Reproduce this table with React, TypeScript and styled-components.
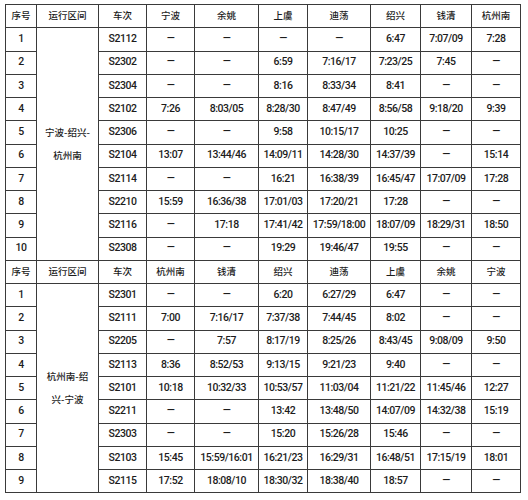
import React from "react";
import styled, { createGlobalStyle } from "styled-components";

const Global = createGlobalStyle`
  html, body { margin: 0; padding: 0; background: #ffffff; }
  body { font-family: Roboto, "Noto Sans CJK SC", sans-serif; }
`;

const Page = styled.div`
  width: 528px;
  height: 500px;
  padding: 4px 0 0 5px;
  box-sizing: border-box;
  background: #ffffff;
  overflow: hidden;
`;

const Table = styled.table`
  border-collapse: collapse;
  table-layout: fixed;
  width: 515px;
  color: #1c1c1c;
`;

const Row = styled.tr`
  height: 23.26px;
`;

const Cell = styled.td<{ $cjk?: boolean }>`
  border: 1px solid #3a3a3a;
  padding: 0;
  text-align: center;
  vertical-align: middle;
  white-space: nowrap;
  font-family: ${(p) =>
    p.$cjk ? `"Noto Sans CJK SC", sans-serif` : `Roboto, "Noto Sans CJK SC", sans-serif`};
  font-size: ${(p) => (p.$cjk ? "9.5px" : "10.5px")};
  font-weight: 500;
  letter-spacing: ${(p) => (p.$cjk ? "0" : "-0.45px")};
  line-height: 1;
`;

const RouteCell = styled.td`
  border: 1px solid #3a3a3a;
  padding: 0;
  text-align: center;
  vertical-align: middle;
  font-family: "Noto Sans CJK SC", sans-serif;
  font-size: 9.5px;
  font-weight: 500;
  line-height: 23px;
`;

const widths = [31, 62, 48, 48, 64, 49, 63, 50, 51, 49];

type Section = {
  header: string[];
  route: [string, string];
  rows: string[][];
};

const D = "—";

const sections: Section[] = [
  {
    header: ["宁波", "余姚", "上虞", "迪荡", "绍兴", "钱清", "杭州南"],
    route: ["宁波-绍兴-", "杭州南"],
    rows: [
      ["S2112", D, D, D, D, "6:47", "7:07/09", "7:28"],
      ["S2302", D, D, "6:59", "7:16/17", "7:23/25", "7:45", D],
      ["S2304", D, D, "8:16", "8:33/34", "8:41", D, D],
      ["S2102", "7:26", "8:03/05", "8:28/30", "8:47/49", "8:56/58", "9:18/20", "9:39"],
      ["S2306", D, D, "9:58", "10:15/17", "10:25", D, D],
      ["S2104", "13:07", "13:44/46", "14:09/11", "14:28/30", "14:37/39", D, "15:14"],
      ["S2114", D, D, "16:21", "16:38/39", "16:45/47", "17:07/09", "17:28"],
      ["S2210", "15:59", "16:36/38", "17:01/03", "17:20/21", "17:28", D, D],
      ["S2116", D, "17:18", "17:41/42", "17:59/18:00", "18:07/09", "18:29/31", "18:50"],
      ["S2308", D, D, "19:29", "19:46/47", "19:55", D, D],
    ],
  },
  {
    header: ["杭州南", "钱清", "绍兴", "迪荡", "上虞", "余姚", "宁波"],
    route: ["杭州南-绍", "兴-宁波"],
    rows: [
      ["S2301", D, D, "6:20", "6:27/29", "6:47", D, D],
      ["S2111", "7:00", "7:16/17", "7:37/38", "7:44/45", "8:02", D, D],
      ["S2205", D, "7:57", "8:17/19", "8:25/26", "8:43/45", "9:08/09", "9:50"],
      ["S2113", "8:36", "8:52/53", "9:13/15", "9:21/23", "9:40", D, D],
      ["S2101", "10:18", "10:32/33", "10:53/57", "11:03/04", "11:21/22", "11:45/46", "12:27"],
      ["S2211", D, D, "13:42", "13:48/50", "14:07/09", "14:32/38", "15:19"],
      ["S2303", D, D, "15:20", "15:26/28", "15:46", D, D],
      ["S2103", "15:45", "15:59/16:01", "16:21/23", "16:29/31", "16:48/51", "17:15/19", "18:01"],
      ["S2115", "17:52", "18:08/10", "18:30/32", "18:38/40", "18:57", D, D],
    ],
  },
];

export default function App() {
  return (
    <Page>
      <Global />
      <Table>
        <colgroup>
          {widths.map((w, i) => (
            <col key={i} style={{ width: w }} />
          ))}
        </colgroup>
        <tbody>
          {sections.map((s, si) => (
            <React.Fragment key={si}>
              <Row>
                <Cell $cjk>序号</Cell>
                <Cell $cjk>运行区间</Cell>
                <Cell $cjk>车次</Cell>
                {s.header.map((h) => (
                  <Cell $cjk key={h}>
                    {h}
                  </Cell>
                ))}
              </Row>
              {s.rows.map((r, ri) => (
                <Row key={ri}>
                  <Cell>{ri + 1}</Cell>
                  {ri === 0 && (
                    <RouteCell rowSpan={s.rows.length}>
                      {s.route[0]}
                      <br />
                      {s.route[1]}
                    </RouteCell>
                  )}
                  {r.map((v, vi) => (
                    <Cell key={vi}>{v}</Cell>
                  ))}
                </Row>
              ))}
            </React.Fragment>
          ))}
        </tbody>
      </Table>
    </Page>
  );
}
